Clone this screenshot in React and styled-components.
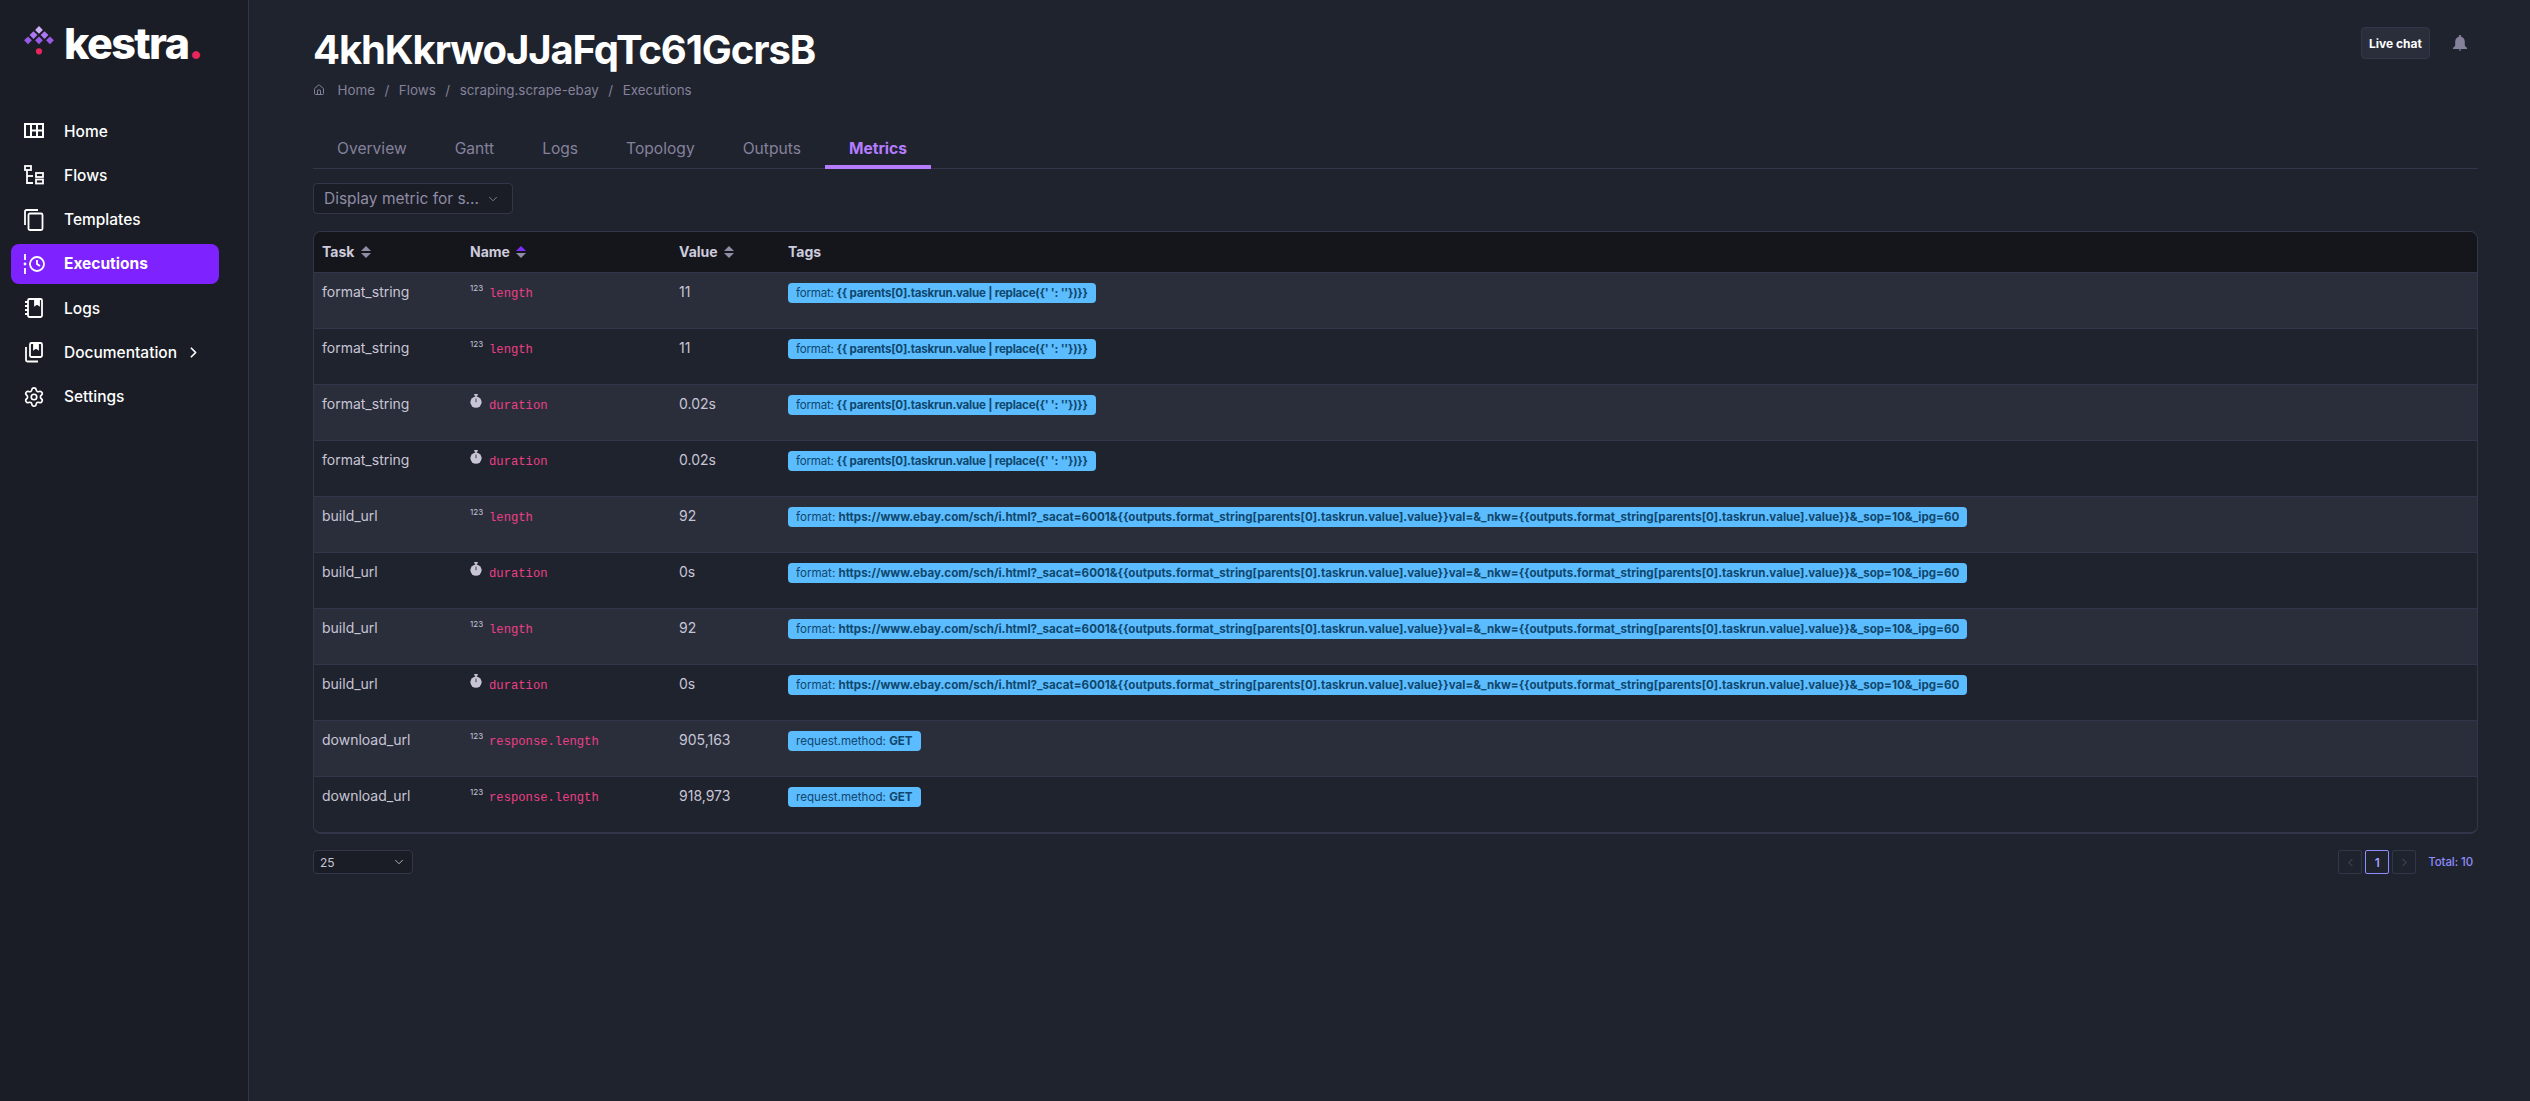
import styled, { createGlobalStyle } from "styled-components";
import { ChevronDown, ChevronLeft, ChevronRight, Settings, Home as HomeIcon } from "lucide-react";

const FORMAT_SHORT = "{{ parents[0].taskrun.value | replace({' ': ''})}}";
const FORMAT_URL = "https://www.ebay.com/sch/i.html?_sacat=6001&{{outputs.format_string[parents[0].taskrun.value].value}}val=&_nkw={{outputs.format_string[parents[0].taskrun.value].value}}&_sop=10&_ipg=60";

const rows = [
  { task: "format_string", type: "counter", name: "length", value: "11", tag: "format:", tagValue: FORMAT_SHORT },
  { task: "format_string", type: "counter", name: "length", value: "11", tag: "format:", tagValue: FORMAT_SHORT },
  { task: "format_string", type: "timer", name: "duration", value: "0.02s", tag: "format:", tagValue: FORMAT_SHORT },
  { task: "format_string", type: "timer", name: "duration", value: "0.02s", tag: "format:", tagValue: FORMAT_SHORT },
  { task: "build_url", type: "counter", name: "length", value: "92", tag: "format:", tagValue: FORMAT_URL },
  { task: "build_url", type: "timer", name: "duration", value: "0s", tag: "format:", tagValue: FORMAT_URL },
  { task: "build_url", type: "counter", name: "length", value: "92", tag: "format:", tagValue: FORMAT_URL },
  { task: "build_url", type: "timer", name: "duration", value: "0s", tag: "format:", tagValue: FORMAT_URL },
  { task: "download_url", type: "counter", name: "response.length", value: "905,163", tag: "request.method:", tagValue: "GET" },
  { task: "download_url", type: "counter", name: "response.length", value: "918,973", tag: "request.method:", tagValue: "GET" },
];

const GlobalStyle = createGlobalStyle`
  html, body {
    margin: 0;
    padding: 0;
    background: #1f232d;
  }
  * {
    box-sizing: border-box;
  }
  body {
    font-family: "Inter", "Liberation Sans", sans-serif;
  }
`;

function LogoMark() {
  return (
    <svg width="30" height="30" viewBox="0 0 30 30">
      <path d="M15 0l3.900 3.900L15 7.800l-3.900-3.900z" fill="#cdaef7" />
      <path d="M9.500 5.200l3.900 3.900-3.900 3.900-3.900-3.900z" fill="#ad78f2" />
      <path d="M20.500 5.200l3.900 3.900-3.900 3.900-3.900-3.900z" fill="#ad78f2" />
      <path d="M4 10.400l3.900 3.900L4 18.200.1 14.300z" fill="#9a5ae8" />
      <path d="M15 10.400l3.900 3.900-3.900 3.900-3.900-3.900z" fill="#9a5ae8" />
      <path d="M26 10.400l3.900 3.900-3.900 3.900-3.900-3.900z" fill="#9a5ae8" />
      <circle cx="15" cy="25.300" r="3.100" fill="#e8265e" />
    </svg>
  );
}

function HomeGrid() {
  return (
    <svg width="22" height="22" viewBox="0 0 22 22" fill="none" stroke="currentColor" strokeWidth="2">
      <rect x="2" y="4" width="18" height="13" />
      <path d="M8 4v13M14 4v13M14 10.500h6M8 10.500h6" />
    </svg>
  );
}

function FlowsIcon() {
  return (
    <svg width="22" height="22" viewBox="0 0 22 22" fill="none" stroke="currentColor" strokeWidth="1.800">
      <rect x="2" y="2" width="6" height="4" />
      <path d="M4 6v13h6" />
      <path d="M4 12h6" />
      <rect x="13" y="9" width="7" height="4" />
      <rect x="13" y="15.500" width="7" height="4" />
    </svg>
  );
}

function TemplatesIcon() {
  return (
    <svg width="22" height="22" viewBox="0 0 22 22" fill="none" stroke="currentColor" strokeWidth="1.800">
      <rect x="5.500" y="4.500" width="14" height="16.500" rx="1.500" />
      <path d="M2 16V2.500A1.500 1.500 0 0 1 3.500 1H15" />
    </svg>
  );
}

function ExecutionsIcon() {
  return (
    <svg width="24" height="22" viewBox="0 0 24 22" fill="none" stroke="currentColor" strokeWidth="1.800">
      <path d="M2 1v6M2 15v6" />
      <circle cx="2" cy="11" r="1.400" fill="currentColor" stroke="none" />
      <path d="M6 11h1" />
      <circle cx="14" cy="11" r="7" />
      <path d="M14 7v4l3 2" />
    </svg>
  );
}

function LogsIcon() {
  return (
    <svg width="22" height="22" viewBox="0 0 22 22" fill="none" stroke="currentColor" strokeWidth="1.800">
      <rect x="5" y="2" width="14" height="18" rx="1.500" />
      <path d="M2 5h3M2 9h3M2 13h3M2 17h3" />
      <path d="M12 2v6l2-1.500L16 8V2z" fill="currentColor" />
    </svg>
  );
}

function DocsIcon() {
  return (
    <svg width="22" height="22" viewBox="0 0 22 22" fill="none" stroke="currentColor" strokeWidth="1.800">
      <rect x="7" y="2" width="12" height="14" rx="1.500" />
      <path d="M3 6v13a1.500 1.500 0 0 0 1.500 1.500H15" />
      <path d="M11 2v6l2-1.500L15 8V2z" fill="currentColor" />
    </svg>
  );
}

function Timer() {
  return (
    <svg width="12" height="14" viewBox="0 0 12 14" fill="#c8c5d6">
      <rect x="4.200" y="0" width="3.600" height="1.500" />
      <rect x="5.200" y="1" width="1.600" height="2" />
      <circle cx="6" cy="8.200" r="5.600" />
      <path d="M5.600 4.500h.8v3.700h-.8z" fill="#1f232d" />
    </svg>
  );
}

function SortCaret({ active }) {
  return (
    <svg width="10" height="12" viewBox="0 0 10 12">
      <path d="M5 0l5 5H0z" fill={active ? "#7e2cff" : "#8f8ca6"} />
      <path d="M5 12l5-5H0z" fill="#8f8ca6" />
    </svg>
  );
}

function Bell() {
  return (
    <svg width="16" height="17" viewBox="0 0 16 17" fill="#85819c">
      <path d="M8 0a1.300 1.300 0 0 0-1.200 1.700C4.500 2.300 3.200 4.200 3.200 6.800v4L1 13v1h14v-1l-2.200-2.200v-4c0-2.600-1.300-4.500-3.600-5.100A1.300 1.300 0 0 0 8 0z" />
      <path d="M6.800 14.500h2.400a1.200 1.200 0 0 1-2.400 0z" />
    </svg>
  );
}

const navItems = [
  { label: "Home", icon: <HomeGrid /> },
  { label: "Flows", icon: <FlowsIcon /> },
  { label: "Templates", icon: <TemplatesIcon /> },
  { label: "Executions", icon: <ExecutionsIcon />, active: true },
  { label: "Logs", icon: <LogsIcon /> },
  { label: "Documentation", icon: <DocsIcon />, more: true },
  { label: "Settings", icon: <Settings size={22} strokeWidth={1.8} /> },
];

const tabs = ["Overview", "Gantt", "Logs", "Topology", "Outputs", "Metrics"];

export default function App() {
  return (
    <Page>
      <GlobalStyle />
      <Sidebar>
        <Logo>
          <LogoMark />
          <LogoText>kestra<LogoDot>.</LogoDot></LogoText>
        </Logo>
        <Nav>
          {navItems.map((item) => (
            <NavItem key={item.label} $active={item.active}>
              <NavIcon>{item.icon}</NavIcon>
              <span>{item.label}</span>
              {item.more && <ChevronRight size={17} strokeWidth={2.4} />}
            </NavItem>
          ))}
        </Nav>
      </Sidebar>
      <Main>
        <TopBar>
          <div>
            <Title>4khKkrwoJJaFqTc61GcrsB</Title>
            <Breadcrumb>
              <HomeIcon size={12} />
              <span>Home</span>
              <i>/</i>
              <span>Flows</span>
              <i>/</i>
              <span>scraping.scrape-ebay</span>
              <i>/</i>
              <span>Executions</span>
            </Breadcrumb>
          </div>
          <TopActions>
            <LiveChat>Live chat</LiveChat>
            <Bell />
          </TopActions>
        </TopBar>
        <Tabs>
          {tabs.map((tab) => (
            <Tab key={tab} $active={tab === "Metrics"}>{tab}</Tab>
          ))}
        </Tabs>
        <Select>
          <span>Display metric for s...</span>
          <ChevronDown size={14} strokeWidth={1.5} />
        </Select>
        <TableCard>
          <Table>
            <colgroup>
              <col width="148" />
              <col width="209" />
              <col width="109" />
              <col />
            </colgroup>
            <thead>
              <tr>
                <Th>Task <SortCaret /></Th>
                <Th>Name <SortCaret active /></Th>
                <Th>Value <SortCaret /></Th>
                <Th>Tags</Th>
              </tr>
            </thead>
            <tbody>
              {rows.map((row, i) => (
                <Row key={i} $odd={i % 2 === 0}>
                  <Td>{row.task}</Td>
                  <Td>
                    <TypeIcon>{row.type === "timer" ? <Timer /> : <sup>123</sup>}</TypeIcon>
                    <Code>{row.name}</Code>
                  </Td>
                  <Td>{row.value}</Td>
                  <Td>
                    <Tag $tight={row.tagValue === FORMAT_SHORT}>{row.tag} <b>{row.tagValue}</b></Tag>
                  </Td>
                </Row>
              ))}
            </tbody>
          </Table>
        </TableCard>
        <Footer>
          <PageSize>
            <span>25</span>
            <ChevronDown size={14} strokeWidth={1.5} />
          </PageSize>
          <Pager>
            <PageButton><ChevronLeft size={13} strokeWidth={1.5} /></PageButton>
            <PageButton $current>1</PageButton>
            <PageButton><ChevronRight size={13} strokeWidth={1.5} /></PageButton>
            <Total>Total: 10</Total>
          </Pager>
        </Footer>
      </Main>
    </Page>
  );
}

const Page = styled.div`
  display: flex;
  min-height: 1101px;
  background: #1f232d;
`;

const Sidebar = styled.aside`
  width: 249px;
  flex: none;
  background: #1a1d25;
  border-right: 1px solid #33364a;
  padding: 24px 11px 0;
`;

const Logo = styled.div`
  display: flex;
  align-items: flex-start;
  gap: 10px;
  height: 87px;
  padding-left: 13px;
  padding-top: 2px;
`;

const LogoText = styled.div`
  color: #fff;
  font-size: 43px;
  font-weight: 800;
  line-height: 34px;
  letter-spacing: -1.600px;
`;

const LogoDot = styled.span`
  color: #e8265e;
`;

const Nav = styled.nav`
  display: flex;
  flex-direction: column;
  gap: 4.300px;
`;

const NavItem = styled.div`
  display: flex;
  align-items: center;
  height: 40px;
  width: 208px;
  padding-left: 12px;
  border-radius: 8px;
  font-size: 15.500px;
  gap: 8px;
  color: #fff;
  font-weight: ${(p) => (p.$active ? 700 : 500)};
  background: ${(p) => (p.$active ? "#7e22ff" : "transparent")};
  svg { flex: none; }
`;

const NavIcon = styled.div`
  width: 33px;
  display: flex;
  align-items: center;
`;

const Main = styled.main`
  flex: 1;
  min-width: 0;
  padding: 0 52px 0 64px;
`;

const TopBar = styled.div`
  display: flex;
  justify-content: space-between;
  align-items: flex-start;
  height: 127px;
  padding-top: 28px;
`;

const Title = styled.h1`
  margin: 0;
  color: #fff;
  font-size: 40px;
  font-weight: 700;
  line-height: 44px;
  letter-spacing: -1.100px;
`;

const Breadcrumb = styled.div`
  display: flex;
  align-items: center;
  gap: 9.500px;
  margin-top: 8px;
  color: #85819c;
  font-size: 13.400px;
  line-height: 20px;
  svg { margin-right: 3px; }
  i { font-style: normal; }
`;

const TopActions = styled.div`
  display: flex;
  align-items: center;
  gap: 22px;
  padding-right: 10px;
  margin-top: -1px;
`;

const LiveChat = styled.div`
  display: flex;
  align-items: center;
  justify-content: center;
  width: 69px;
  height: 32px;
  border: 1px solid #33364a;
  border-radius: 4px;
  background: #2a2e3b;
  color: #fff;
  font-size: 12px;
  font-weight: 700;
`;

const Tabs = styled.div`
  display: flex;
  height: 42px;
  border-bottom: 1px solid #33364a;
`;

const Tab = styled.div`
  display: flex;
  align-items: center;
  padding: 0 24px;
  height: 42px;
  font-size: 15.600px;
  color: ${(p) => (p.$active ? "#b67cff" : "#85819c")};
  font-weight: ${(p) => (p.$active ? 700 : 400)};
  border-bottom: ${(p) => (p.$active ? "4px solid #b67cff" : "none")};
  padding-top: ${(p) => (p.$active ? "4px" : "0")};
`;

const Select = styled.div`
  display: flex;
  align-items: center;
  justify-content: space-between;
  width: 200px;
  height: 31px;
  margin-top: 14px;
  padding: 0 12px 0 10px;
  border: 1px solid #33364a;
  border-radius: 4px;
  background: #1a1d25;
  color: #8f8ca6;
  font-size: 15.500px;
`;

const TableCard = styled.div`
  margin-top: 17px;
  border: 1px solid #33364a;
  border-bottom-width: 2px;
  border-radius: 8px;
  overflow: hidden;
`;

const Table = styled.table`
  width: 100%;
  border-collapse: collapse;
  table-layout: fixed;
`;

const Th = styled.th`
  height: 40px;
  padding: 0 8px;
  background: #15161c;
  color: #cdcbdc;
  font-size: 14px;
  font-weight: 700;
  text-align: left;
  svg { margin-left: 3px; vertical-align: -1px; }
`;

const Row = styled.tr`
  height: 56px;
  background: ${(p) => (p.$odd ? "#2a2e3b" : "#1f232d")};
  border-top: 1px solid #33364a;
`;

const Td = styled.td`
  padding: 9px 8px 0;
  vertical-align: top;
  color: #c8c5d6;
  font-size: 14px;
  line-height: 20px;
  white-space: nowrap;
`;

const TypeIcon = styled.span`
  display: inline-block;
  width: 19px;
  font-size: 8px;
  vertical-align: top;
  line-height: 13px;
  sup { font-size: 8px; vertical-align: baseline; line-height: 13px; }
`;

const Code = styled.code`
  font-family: "Liberation Mono", "DejaVu Sans Mono", monospace;
  font-size: 12.200px;
  color: #ee3f86;
`;

const Tag = styled.span`
  display: inline-block;
  height: 20px;
  margin-top: 1px;
  padding: 0 8px;
  border-radius: 4px;
  background: #5bbcff;
  color: #10476d;
  font-size: 11.600px;
  line-height: 20px;
  vertical-align: top;
  white-space: pre;
  letter-spacing: ${(p) => (p.$tight ? "-0.24px" : "0")};
  b { font-weight: 700; }
`;

const Footer = styled.div`
  display: flex;
  justify-content: space-between;
  align-items: center;
  margin-top: 16px;
`;

const PageSize = styled.div`
  display: flex;
  align-items: center;
  justify-content: space-between;
  width: 100px;
  height: 24px;
  padding: 0 6px;
  border: 1px solid #33364a;
  border-radius: 4px;
  background: #1a1d25;
  color: #c8c5d6;
  font-size: 12px;
`;

const Pager = styled.div`
  display: flex;
  align-items: center;
  gap: 3px;
`;

const PageButton = styled.div`
  display: flex;
  align-items: center;
  justify-content: center;
  width: 24px;
  height: 24px;
  border-radius: 2px;
  border: 1px solid ${(p) => (p.$current ? "#8f8cff" : "#33364a")};
  color: ${(p) => (p.$current ? "#a3a0ff" : "#5d5a70")};
  font-size: 12px;
  font-weight: 600;
`;

const Total = styled.div`
  margin-left: 9px;
  margin-right: 5px;
  color: #8f8cff;
  font-size: 11.500px;
  font-weight: 500;
  letter-spacing: -0.1px;
`;
